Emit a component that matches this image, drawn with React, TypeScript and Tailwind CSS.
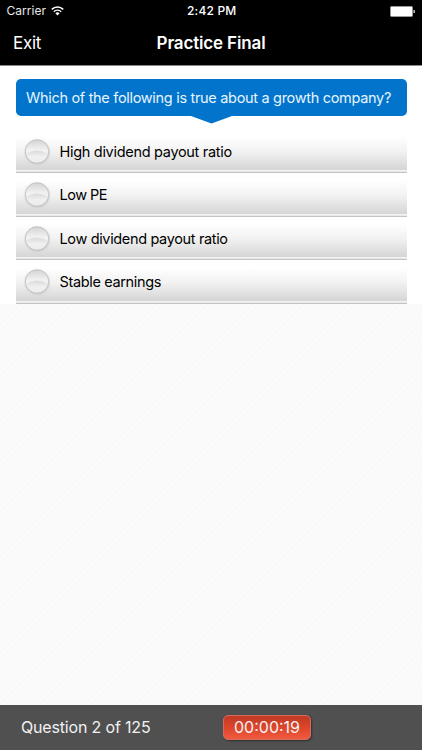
const answers = [
  { label: 'High dividend payout ratio', spacing: 'tracking-[-0.3px]' },
  { label: 'Low PE', spacing: 'tracking-[-0.5px]' },
  { label: 'Low dividend payout ratio', spacing: 'tracking-[-0.35px]' },
  { label: 'Stable earnings', spacing: 'tracking-[-0.35px]' },
];

function WifiIcon() {
  return (
    <svg width="13" height="10" viewBox="0 0 13 10" fill="none" stroke="#fff">
      <path d="M0.8 3.4a8.1 8.1 0 0 1 11.4 0" strokeWidth="1.6" />
      <path d="M2.8 5.7a5.2 5.2 0 0 1 7.4 0" strokeWidth="1.4" />
      <path d="M4.4 7.3a3 3 0 0 1 4.2 0L6.5 9.5z" fill="#fff" stroke="none" />
    </svg>
  );
}

function BatteryIcon() {
  return (
    <svg width="26" height="11" viewBox="0 0 26 11">
      <rect x="0.5" y="0.5" width="22" height="10" rx="1" fill="#fff" stroke="#999" />
      <path d="M23.5 4h1.3v3h-1.3z" fill="#ddd" />
    </svg>
  );
}

function Radio() {
  return (
    <svg className="shrink-0" width="28" height="30" viewBox="0 0 28 30">
      <defs>
        <linearGradient id="knob" x1="0" y1="0" x2="0" y2="1">
          <stop offset="0" stopColor="#d4d4d4" />
          <stop offset="0.45" stopColor="#f2f2f2" />
          <stop offset="1" stopColor="#ececec" />
        </linearGradient>
        <linearGradient id="gloss" x1="0" y1="0" x2="0" y2="1">
          <stop offset="0" stopColor="#dadada" />
          <stop offset="0.55" stopColor="#f0f0f0" />
          <stop offset="1" stopColor="#ececec" />
        </linearGradient>
        <filter id="soft" x="-20%" y="-20%" width="140%" height="140%">
          <feGaussianBlur stdDeviation="0.9" />
        </filter>
      </defs>
      <circle cx="14.3" cy="15.3" r="12" fill="#c4c4c4" filter="url(#soft)" />
      <circle cx="14" cy="14.5" r="11.7" fill="url(#knob)" stroke="#bcbcbc" strokeWidth="0.8" />
      <path d="M3.8 16.5Q14 10.500 24.2 16.5A10.4 10.4 0 0 1 3.8 16.5z" fill="url(#gloss)" />
    </svg>
  );
}

export default function App() {
  return (
    <div className="flex h-[750px] w-[422px] flex-col overflow-hidden bg-[#fafafa] font-['Inter','Liberation_Sans',sans-serif] text-black">
      <header className="h-[66px] shrink-0 border-b border-[#8a8a8a] bg-black text-white">
        <div className="grid h-[22px] grid-cols-3 items-center pr-[6px] pl-[6.5px] text-[12px]">
          <div className="flex items-center gap-[5px] text-[#e8e8e8]">
            <span className="tracking-[0.05px]">Carrier</span>
            <WifiIcon />
          </div>
          <span className="pl-[1px] text-center font-medium tracking-[0.2px]">2:42 PM</span>
          <div className="flex justify-end">
            <BatteryIcon />
          </div>
        </div>
        <div className="grid h-[43px] grid-cols-3 items-center px-[13px] text-[17px]">
          <span className="tracking-[-0.3px]">Exit</span>
          <h1 className="text-center font-semibold whitespace-nowrap tracking-[-0.15px]">Practice Final</h1>
        </div>
      </header>

      <main className="h-[238px] shrink-0 bg-white px-[15.5px] pt-[12.5px]">
        <div className="relative h-[37.5px] rounded-[5px] bg-[#0274cc] pl-[10.5px] text-[14.5px] leading-[38px] whitespace-nowrap text-[#e6f4ff]">
          <span className="tracking-[-0.31px]">Which of the following is true about a growth company?</span>
          <svg className="absolute top-[37px] left-[175px]" width="41" height="8" viewBox="0 0 41 8">
            <path d="M0 0h41L20.5 7.5z" fill="#0274cc" />
          </svg>
        </div>
        <ul className="mt-[14px]">
          {answers.map((answer) => (
            <li key={answer.label} className="h-[43.5px] pt-[3px]">
              <div className="flex h-[37px] items-center bg-linear-to-b from-white from-10% via-[#f2f2f2] via-50% to-[#d5d5d5] pl-[7.5px]">
                <Radio />
                <span className={`pl-[8.5px] text-[14.5px] ${answer.spacing}`}>{answer.label}</span>
              </div>
              <div className="h-[3px] bg-linear-to-b from-[#f4f4f4] from-40% to-[#c4c4c4] to-80%" />
            </li>
          ))}
        </ul>
      </main>

      <section className="flex-1 bg-[repeating-linear-gradient(135deg,#fbfbfb_0px,#fbfbfb_2px,#f9f9f9_2px,#f9f9f9_4px)]" />

      <footer className="flex h-[45px] shrink-0 items-center bg-[#505050] pl-[21px] text-[16px] text-[#f2f2f2]">
        <span className="w-[201.5px] pb-[1px] tracking-[-0.17px]">Question 2 of 125</span>
        <div className="flex h-[25px] w-[88px] items-center justify-center rounded-[5px] border border-[#d56b5a] bg-linear-to-b from-[#bf3a24] via-[#dd452b] to-[#f05a3e] pb-[1px] pl-[1px] shadow-[1px_1px_2px_rgba(0,0,0,0.4)]">
          00:00:19
        </div>
      </footer>
    </div>
  );
}
